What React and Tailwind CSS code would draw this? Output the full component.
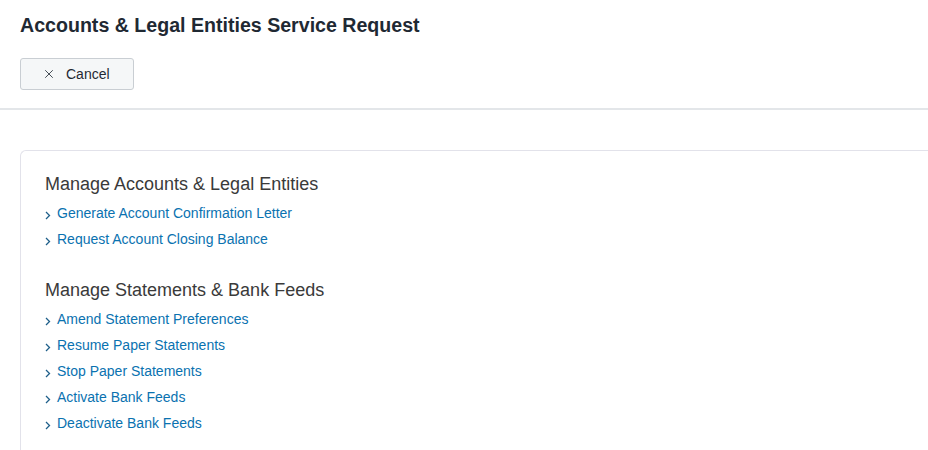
import { X } from "lucide-react";

const groups = [
  {
    title: "Manage Accounts & Legal Entities",
    links: ["Generate Account Confirmation Letter", "Request Account Closing Balance"],
  },
  {
    title: "Manage Statements & Bank Feeds",
    links: [
      "Amend Statement Preferences",
      "Resume Paper Statements",
      "Stop Paper Statements",
      "Activate Bank Feeds",
      "Deactivate Bank Feeds",
    ],
  },
];

function Chevron() {
  return (
    <svg width="6" height="9" viewBox="0 0 6 9" className="mt-[4px] shrink-0">
      <path d="M1 1l3.5 3.5L1 8" fill="none" stroke="#1f5f8a" strokeWidth="1.3" />
    </svg>
  );
}

export default function App() {
  return (
    <div className="min-h-screen bg-white font-['Liberation_Sans',Arial,sans-serif] overflow-hidden">
      {/* Header */}
      <div className="px-5 pt-[13px] pb-[18px] border-b-2 border-[#e3e6e9]">
        <h1 className="text-[19.6px] leading-6 font-bold text-[#1f2933]">
          Accounts &amp; Legal Entities Service Request
        </h1>
        <button className="mt-[21px] w-[114px] h-[32px] flex items-center gap-[10px] pl-[21px] rounded-[3px] border border-[#c9ced3] bg-[#f5f7f8] text-[14px] text-[#1f2933]">
          <X size={14} strokeWidth={1.4} />
          Cancel
        </button>
      </div>

      {/* Card */}
      <div className="pl-5 pt-[40px]">
        <div className="w-[1000px] rounded-tl-[6px] border-l border-t border-[#e2e2ea] pl-[24px] pt-[21px] pb-8">
          {groups.map((g, i) => (
            <div key={g.title} className={i > 0 ? "mt-[26px]" : ""}>
              <h2 className="text-[18px] leading-6 text-[#3a3a3a]">{g.title}</h2>
              <ul className="mt-[4px]">
                {g.links.map((l) => (
                  <li key={l} className="flex items-center gap-[6px] h-[26px]">
                    <Chevron />
                    <a href="#" className="text-[14px] text-[#0a72b0]">
                      {l}
                    </a>
                  </li>
                ))}
              </ul>
            </div>
          ))}
        </div>
      </div>
    </div>
  );
}
